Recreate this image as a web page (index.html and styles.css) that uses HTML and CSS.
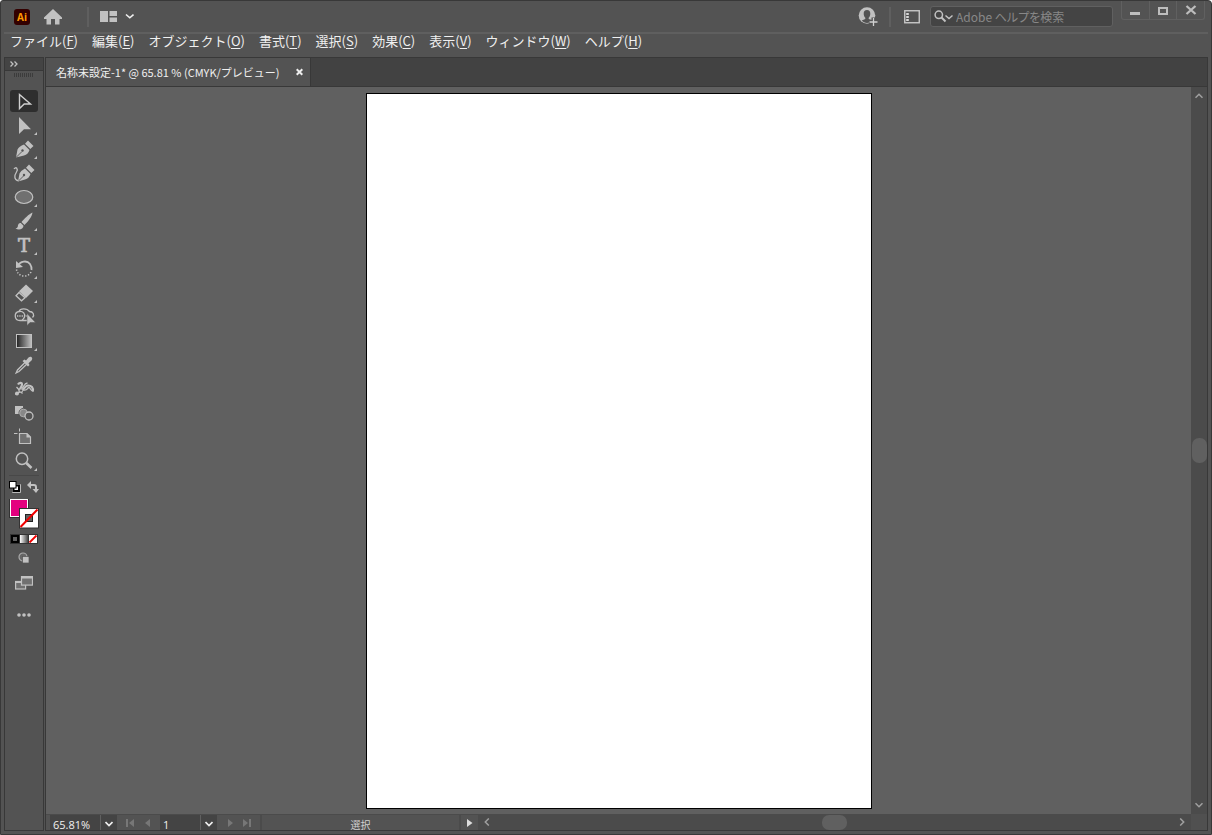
FILE: index.html
```html
<!DOCTYPE html>
<html lang="ja">
<head>
<meta charset="utf-8">
<meta name="viewport" content="width=device-width, initial-scale=1">
<title>名称未設定-1</title>
<link rel="stylesheet" href="styles.css">
</head>
<body>
<div class="app">
  <header class="titlebar">
    <svg class="logo" width="16" height="16" viewBox="0 0 16 16" role="img" aria-label="Ai"><rect width="16" height="16" rx="3" fill="#330000"/><text x="8" y="12" text-anchor="middle" class="logo-text">Ai</text></svg>
    <button class="icon-btn home" aria-label="ホーム"><svg width="18" height="16" viewBox="0 0 18 16"><path d="M9 0L18 8.5V10H15.500V15.500H11V10H7V15.500H2.500V10H0V8.500Z" fill="#c1c1c1"/></svg></button>
    <span class="divider"></span>
    <button class="icon-btn layout" aria-label="ワークスペース"><svg width="34" height="12" viewBox="0 0 34 12"><path d="M0 0H8V11H0ZM9.500 0H17V5H9.500ZM9.500 6.500H17V11H9.500Z" fill="#c1c1c1"/><path d="M26 3.500L29.800 6.800L33.500 3.500" fill="none" stroke="#f0f0f0" stroke-width="1.600"/></svg></button>
    <span class="spacer"></span>
    <button class="icon-btn" aria-label="招待"><svg width="20" height="20" viewBox="0 0 20 20"><circle cx="9" cy="8.500" r="8.300" fill="#c1c1c1"/><path d="M9 3C6.700 3 5.600 4.600 5.700 6.900C5.800 8.900 6.700 10 7.300 10.700V12L3.800 13.600C5 15 7 16 9 16S13 15 14.200 13.600L10.700 12V10.700C11.300 10 12.200 8.900 12.300 6.900C12.400 4.600 11.300 3 9 3Z" fill="#535353"/><path d="M15.500 10.500V19M11 14.700H19.500" stroke="#535353" stroke-width="4"/><path d="M15.500 11V19M11.500 15H19.500" stroke="#d0d0d0" stroke-width="1.300"/></svg></button>
    <span class="divider right-divider"></span>
    <button class="icon-btn panel-btn" aria-label="パネル"><svg width="16" height="14" viewBox="0 0 16 14"><rect x="0.750" y="0.750" width="14.500" height="12" fill="none" stroke="#c8c8c8" stroke-width="1.400"/><path d="M3.500 3V11" stroke="#d8d8d8" stroke-width="2.600" stroke-dasharray="2 1"/></svg></button>
    <label class="search">
      <svg width="20" height="14" viewBox="0 0 20 14"><circle cx="4.800" cy="4.800" r="3.700" fill="none" stroke="#c1c1c1" stroke-width="1.500"/><path d="M7.500 7.500L11.500 11.500" stroke="#c1c1c1" stroke-width="2"/><path d="M11.500 5.500L15 8.500L18.500 5.500" fill="none" stroke="#c1c1c1" stroke-width="1.500"/></svg>
      <input type="text" placeholder="Adobe ヘルプを検索" aria-label="Adobe ヘルプを検索">
    </label>
    <div class="window-buttons">
      <button aria-label="最小化"><svg width="12" height="12" viewBox="0 0 12 12"><rect x="1" y="8" width="10" height="3" fill="#bdbdbd"/></svg></button>
      <button aria-label="最大化"><svg width="12" height="12" viewBox="0 0 12 12"><rect x="2" y="4" width="8" height="6" fill="none" stroke="#bdbdbd" stroke-width="2"/></svg></button>
      <button aria-label="閉じる"><svg width="12" height="12" viewBox="0 0 12 12"><path d="M1.500 2L10.500 10M10.500 2L1.500 10" stroke="#bdbdbd" stroke-width="2.300"/></svg></button>
    </div>
  </header>

  <nav class="menubar">
    <button>ファイル(<u>F</u>)</button>
    <button>編集(<u>E</u>)</button>
    <button>オブジェクト(<u>O</u>)</button>
    <button>書式(<u>T</u>)</button>
    <button>選択(<u>S</u>)</button>
    <button>効果(<u>C</u>)</button>
    <button>表示(<u>V</u>)</button>
    <button>ウィンドウ(<u>W</u>)</button>
    <button>ヘルプ(<u>H</u>)</button>
  </nav>

  <main class="workspace">
    <aside class="tools">
      <button class="tools-head" aria-label="展開"><svg width="8" height="6" viewBox="0 0 8 6"><path d="M0.500 0.500L3 3L0.500 5.500M4.500 0.500L7 3L4.500 5.500" fill="none" stroke="#c1c1c1" stroke-width="1.300"/></svg></button>
      <div class="grip"></div>
      <div class="tool-list">
        <button class="tool selected" aria-label="選択"><svg viewBox="0 0 28 22"><path d="M9.500 4.500V18.500L14.200 14H20.500Z" fill="none" stroke="#d0d0d0" stroke-width="1.400"/></svg></button>
        <button class="tool more" aria-label="ダイレクト選択"><svg viewBox="0 0 28 22"><path class="fill" d="M9 3V20L14 15.200H21Z"/></svg></button>
        <button class="tool more" aria-label="ペン"><svg viewBox="0 0 28 22"><path class="fill" d="M6 19.500L7.500 11.500Q9 8.500 14 6.500L19.500 12Q18 16.500 14 17.500ZM15 5.700L18 2.500L23.500 8L20.300 11Z"/><path d="M6 19.500L12 13.500" stroke="#535353" stroke-width=".9"/><circle cx="12.500" cy="12.500" r="1.200" fill="#535353"/></svg></button>
        <button class="tool" aria-label="曲線"><svg viewBox="0 0 28 22"><path class="fill" d="M8 19.500L9.500 11.500Q11 8.500 15 6.500L20.500 12Q19 16.500 15 17.500ZM16 5.700L19 2.500L24.500 8L21.300 11Z"/><path d="M8 19.500L13.500 14" stroke="#535353" stroke-width=".9"/><circle cx="14" cy="13" r="1.200" fill="#535353"/><path class="line" d="M4 7C6 4 8.500 7 6.500 10C4.500 13 3.500 18 8.500 18.800"/></svg></button>
        <button class="tool more" aria-label="楕円形"><svg viewBox="0 0 28 22"><ellipse cx="14" cy="11" rx="8.800" ry="6.500" fill="#707070" stroke="#c1c1c1" stroke-width="1.200"/></svg></button>
        <button class="tool more" aria-label="ブラシ"><svg viewBox="0 0 28 22"><path class="fill" d="M22.500 2.500C19 4 14 9 11.500 12L14.500 15C17.500 12 22 7 22.500 2.500ZM10.800 13C8 13 8 15.500 7.700 17Q7 18.300 5.500 18.500C8.500 20.500 13.500 19.500 13.500 15.800Z"/></svg></button>
        <button class="tool more" aria-label="文字"><svg viewBox="0 0 28 22"><text class="type-icon" x="14" y="18" text-anchor="middle">T</text></svg></button>
        <button class="tool more" aria-label="回転"><svg viewBox="0 0 28 22"><path d="M8 8C10 3 17 2 20 6Q22 9 21.500 12" fill="none" stroke="#c1c1c1" stroke-width="1.800"/><path d="M21 14C18 20 8 19.500 6.500 11.500" fill="none" stroke="#c1c1c1" stroke-width="1.500" stroke-dasharray="1.300 1.700"/><path class="fill" d="M6 3V10L13 9Z"/></svg></button>
        <button class="tool more" aria-label="消しゴム"><svg viewBox="0 0 28 22"><path class="fill" d="M16 2.500L23 9L16 16L9 9.300Z"/><path class="line" d="M9 10.500L6 13.700L11.500 18.800L15 15.700Z"/></svg></button>
        <button class="tool" aria-label="シェイプ形成"><svg viewBox="0 0 28 22"><path class="line" d="M9 5.500C10 2 17 2 19.500 5.500C23 5.500 25 9 22.500 11.500M17 14.500H10C4 14.500 3.500 6 9.500 5.500C13 5 15.500 8 14.500 11Q13.500 13.500 12 14"/><path d="M7 10H18" stroke="#c1c1c1" stroke-width="1.300" stroke-dasharray="1.300 1"/><path d="M17 7.500V19.500L20 16.500H25.500Z" fill="#c1c1c1" stroke="#535353" stroke-width=".5"/></svg></button>
        <button class="tool more" aria-label="グラデーション"><svg viewBox="0 0 28 22"><defs><linearGradient id="tool-gradient"><stop stop-color="#222"/><stop offset="1" stop-color="#c1c1c1"/></linearGradient></defs><rect x="6.500" y="4.500" width="15" height="13" fill="url(#tool-gradient)" stroke="#c1c1c1"/></svg></button>
        <button class="tool" aria-label="スポイト"><svg viewBox="0 0 28 22"><path class="line" d="M15.500 8L7.500 16L6.200 18.800L9 17.500L17.500 9.500"/><path class="fill" d="M12.500 7L14.500 5.500L16 6.500L18.500 3.500C21 1.500 23.500 4 21.500 6.500L18.500 9.200L19.500 11L18 12.500Z"/></svg></button>
        <button class="tool" aria-label="パペットワープ"><svg viewBox="0 0 28 22"><path d="M8 6.500C9 4.500 12 4 12 6.500C12 9 8.500 12 9.500 13.500C12 15 14.500 7.500 18 7.500C21.500 7.500 23.500 9.500 22.800 13.500" fill="none" stroke="#c1c1c1" stroke-width="2.200"/><path class="line" d="M12 10.500C14 8.500 14 5.500 17.500 5M6.500 9L12.500 15.500M5 16C9 15.500 11 11.500 14 12C18 12.500 17 9.500 19 9.500C20.500 9.500 20 12.500 23 13"/><circle cx="11" cy="12.500" r="1.700" fill="#535353" stroke="#c1c1c1"/><circle class="fill" cx="7" cy="15.500" r="2"/></svg></button>
        <button class="tool" aria-label="ブレンド"><svg viewBox="0 0 28 22"><rect class="fill" x="5" y="4" width="8" height="8"/><circle cx="13.500" cy="11" r="4.500" fill="#888" stroke="#535353"/><circle cx="13.500" cy="11" r="3.800" fill="#888" stroke="#aaa"/><circle cx="19" cy="14" r="4" fill="#535353" stroke="#c1c1c1" stroke-width="1.300"/></svg></button>
        <button class="tool" aria-label="アートボード"><svg viewBox="0 0 28 22"><path d="M9.500 7.500H17L20.500 11V17.500H9.500Z" fill="#707070" stroke="#c1c1c1" stroke-width="1.200"/><path class="fill" d="M16.500 7L21 11.500H16.500Z"/><path d="M9.500 2.500V5.500M4 7.500H7.500" stroke="#c1c1c1"/></svg></button>
        <button class="tool more" aria-label="ズーム"><svg viewBox="0 0 28 22"><circle cx="12" cy="8.700" r="5.700" fill="none" stroke="#c1c1c1" stroke-width="1.500"/><path d="M16.300 13L21.500 18" stroke="#c1c1c1" stroke-width="2.600"/></svg></button>
      </div>
      <div class="colors">
        <div class="color-row">
          <button class="icon-btn" aria-label="初期設定の塗りと線"><svg width="12" height="12" viewBox="0 0 12 12"><path d="M4 4H11V11H4Z" fill="none" stroke="#ddd" stroke-width="1.500"/><rect x="4.500" y="4.500" width="5.500" height="5.500" fill="#fff" stroke="#000" stroke-width="2"/><rect x=".5" y=".5" width="6.500" height="6.500" fill="#fff" stroke="#000"/></svg></button>
          <button class="icon-btn" aria-label="塗りと線を入れ替え"><svg width="12" height="12" viewBox="0 0 12 12"><path d="M3 4H7Q9 4 9 6V9" fill="none" stroke="#c1c1c1" stroke-width="2"/><path d="M0 4L4 0V8ZM9 12L5.500 8H12Z" fill="#c1c1c1"/></svg></button>
        </div>
        <button class="icon-btn" aria-label="塗りと線"><svg width="30" height="30" viewBox="0 0 30 30"><rect width="20" height="19" fill="#333"/><rect x="1.500" y=".5" width="17" height="17" fill="#e4007f" stroke="#fff"/><rect x="10" y="9" width="20" height="20.500" fill="#333"/><rect x="11" y="10" width="18" height="18.500" fill="#fff"/><rect x="16.500" y="15.500" width="7" height="7" fill="#606060" stroke="#222"/><path d="M11.500 28L28.500 10.500" stroke="#f00000" stroke-width="2"/></svg></button>
        <button class="icon-btn modes" aria-label="カラーモード"><svg width="28" height="10" viewBox="0 0 28 10"><defs><linearGradient id="mode-gradient"><stop stop-color="#fff"/><stop offset="1" stop-color="#444"/></linearGradient></defs><rect width="28" height="10" fill="#333"/><rect x="1" y="1" width="8" height="8" fill="#000"/><rect x="3" y="3" width="4" height="4" fill="#606060"/><rect x="10" y="1" width="8" height="8" fill="url(#mode-gradient)"/><rect x="19" y="1" width="8" height="8" fill="#fff"/><path d="M19.500 8.500L26.500 1.500" stroke="#f00000" stroke-width="1.800"/></svg></button>
        <button class="icon-btn draw-mode" aria-label="描画モード"><svg width="12" height="12" viewBox="0 0 12 12"><circle cx="5" cy="5" r="4" fill="#666" stroke="#aaa" stroke-width="1.200"/><rect x="4.500" y="4.500" width="6.500" height="6.500" fill="#c1c1c1" stroke="#535353" stroke-width=".7"/></svg></button>
        <button class="icon-btn screen-mode" aria-label="スクリーンモード"><svg width="18" height="14" viewBox="0 0 18 14"><rect x=".6" y="5.500" width="10" height="7.500" fill="#707070" stroke="#c1c1c1" stroke-width="1.200"/><rect x="6.500" y=".6" width="11" height="8.500" fill="#707070" stroke="#c1c1c1" stroke-width="1.200"/><path d="M0 6H6M6 1.500H18" stroke="#c1c1c1" stroke-width="1.800"/></svg></button>
        <button class="icon-btn" aria-label="ツールバーを編集"><svg width="16" height="6" viewBox="0 0 16 6"><g class="fill"><circle cx="3" cy="3" r="1.800"/><circle cx="8" cy="3" r="1.800"/><circle cx="13" cy="3" r="1.800"/></g></svg></button>
      </div>
    </aside>

    <section class="document">
      <div class="tabs">
        <div class="tab"><span>名称未設定-1* @ 65.81 % (CMYK/プレビュー)</span><button class="icon-btn" aria-label="タブを閉じる"><svg width="7" height="8" viewBox="0 0 7 8"><path d="M.7 1.200L6.300 6.800M6.300 1.200L.7 6.800" stroke="#eee" stroke-width="2"/></svg></button></div>
      </div>
      <div class="view">
        <div class="canvas"><div class="artboard"></div></div>
        <div class="vscroll">
          <button class="icon-btn" aria-label="上へ"><svg width="8" height="6" viewBox="0 0 8 6"><path class="arrow" d="M.5 4.800L4 1.300L7.500 4.800"/></svg></button>
          <span class="vthumb"></span>
          <button class="icon-btn" aria-label="下へ"><svg width="8" height="6" viewBox="0 0 8 6"><path class="arrow" d="M.5 1.200L4 4.700L7.500 1.200"/></svg></button>
        </div>
      </div>
      <footer class="bottom">
        <div class="status">
          <input class="field zoom-field" type="text" value="65.81%" aria-label="ズーム">
          <button class="drop" aria-label="ズームを選択"><svg width="8" height="6" viewBox="0 0 8 6"><path d="M.5 1L4 4.500L7.500 1" fill="none" stroke="#eee" stroke-width="1.700"/></svg></button>
          <div class="nav-pair">
            <button class="icon-btn" aria-label="先頭"><svg width="8" height="8" viewBox="0 0 8 8"><path d="M0 0H2V8H0ZM8 0V8L3 4Z" fill="#777"/></svg></button>
            <button class="icon-btn" aria-label="前へ"><svg width="8" height="8" viewBox="0 0 8 8"><path d="M7 0V8L2 4Z" fill="#777"/></svg></button>
          </div>
          <input class="field page-field" type="text" value="1" aria-label="アートボード">
          <button class="drop" aria-label="アートボードを選択"><svg width="8" height="6" viewBox="0 0 8 6"><path d="M.5 1L4 4.500L7.500 1" fill="none" stroke="#eee" stroke-width="1.700"/></svg></button>
          <div class="nav-pair">
            <button class="icon-btn" aria-label="次へ"><svg width="8" height="8" viewBox="0 0 8 8"><path d="M2 0V8L7 4Z" fill="#777"/></svg></button>
            <button class="icon-btn" aria-label="最後"><svg width="8" height="8" viewBox="0 0 8 8"><path d="M0 0V8L5 4ZM6 0H8V8H6Z" fill="#777"/></svg></button>
          </div>
          <span class="current-tool">選択</span>
          <button class="icon-btn play" aria-label="表示項目"><svg width="6" height="8" viewBox="0 0 6 8"><path d="M0 0V8L5.500 4Z" fill="#ddd"/></svg></button>
        </div>
        <div class="hscroll">
          <button class="icon-btn" aria-label="左へ"><svg width="6" height="8" viewBox="0 0 6 8"><path class="arrow" d="M4.800 .5L1.300 4L4.800 7.500"/></svg></button>
          <span class="hthumb"></span>
          <button class="icon-btn" aria-label="右へ"><svg width="6" height="8" viewBox="0 0 6 8"><path class="arrow" d="M1.200 .5L4.700 4L1.200 7.500"/></svg></button>
        </div>
        <span class="corner"></span>
      </footer>
    </section>
  </main>
</div>
</body>
</html>
```
FILE: styles.css
```css
* { box-sizing: border-box; }

body {
  margin: 0;
  background: #fff;
  color: #f0f0f0;
  font: 12px/16px "Noto Sans CJK JP", sans-serif;
}

button, input {
  margin: 0;
  padding: 0;
  border: 0;
  background: none;
  color: inherit;
  font: inherit;
}

svg { display: block; }
.fill { fill: #c1c1c1; }
.line { fill: none; stroke: #c1c1c1; stroke-width: 1.3; }
.arrow { fill: none; stroke: #a0a0a0; stroke-width: 1.5; }

.app {
  display: flex;
  flex-direction: column;
  height: 100vh;
  padding: 0 3px 3px;
  border: 1px solid #383838;
  border-radius: 3px 4px 0 0;
  background: #535353;
}

.icon-btn {
  display: flex;
  align-items: center;
  justify-content: center;
}

/* Title bar */
.titlebar {
  display: flex;
  align-items: center;
  height: 33px;
  padding-left: 10px;
  border-bottom: 2px solid #5f5f5f;
}

.logo-text {
  fill: #ff9a00;
  font: bold 10px "Open Sans", sans-serif;
}

.home { margin-left: 14px; }
.divider { width: 2px; height: 20px; margin-left: 25px; background: #5f5f5f; }
.layout { margin-left: 11px; }
.spacer { flex: 1; }
.right-divider { margin-left: 11px; }
.panel-btn { margin-left: 13px; }

.search {
  display: flex;
  align-items: center;
  gap: 2px;
  width: 183px;
  height: 21px;
  margin-left: 10px;
  padding-left: 3px;
  border: 1px solid #606060;
  border-radius: 3px;
  background: #444;
}

.search input {
  flex: 1;
  min-width: 0;
  height: 18px;
  font-size: 12px;
  font-feature-settings: "palt";
}

.search input::placeholder { color: #888; opacity: 1; }

.window-buttons {
  display: flex;
  align-self: flex-start;
  width: 84px;
  margin: 0 3px 0 8px;
  border: solid #606060;
  border-width: 0 1px 1px;
  border-radius: 0 0 3px 3px;
}

.window-buttons button {
  display: flex;
  flex: 1;
  align-items: center;
  justify-content: center;
  height: 18px;
}

.window-buttons button + button { border-left: 1px solid #606060; }

/* Menu bar */
.menubar {
  display: flex;
  gap: 14px;
  height: 23px;
  padding-left: 6px;
}

.menubar button {
  height: 14px;
  font-size: 13px;
  line-height: 14px;
  white-space: nowrap;
}

.menubar u { text-underline-offset: 2px; }

/* Tools */
.workspace {
  display: flex;
  flex: 1;
  gap: 1px;
  min-height: 0;
}

.tools {
  display: flex;
  flex-direction: column;
  align-items: center;
  width: 40px;
  border: 1px solid #383838;
}

.tools-head {
  width: 100%;
  height: 13px;
  padding-left: 5px;
  border-bottom: 1px solid #383838;
  background: #444;
}

.grip {
  width: 20px;
  height: 4px;
  margin: 2px 0 13px;
  background: repeating-linear-gradient(90deg, #3c3c3c 0 1px, #535353 1px 2px);
}

.tool-list { display: grid; gap: 2px; }

.tool {
  position: relative;
  width: 28px;
  height: 22px;
  border-radius: 3px;
}

.tool svg { width: 28px; height: 22px; }
.selected { background: #2e2e2e; }

.more::after {
  content: "";
  position: absolute;
  right: 1px;
  bottom: 1px;
  border-bottom: 3px solid #c1c1c1;
  border-left: 3px solid transparent;
}

.type-icon {
  fill: #c1c1c1;
  stroke: #c1c1c1;
  stroke-width: 0.7;
  font: 18px "DejaVu Serif", serif;
}

.colors {
  display: flex;
  flex-direction: column;
  align-items: center;
  width: 30px;
  margin-top: 3px;
  padding-top: 5px;
  border-top: 1px solid #484848;
}

.color-row {
  display: flex;
  justify-content: space-between;
  width: 100%;
  height: 12px;
  margin-bottom: 6px;
}

.modes { margin-top: 5px; }
.draw-mode { margin-top: 8px; }
.screen-mode { margin: 12px 0 22px; }

/* Document */
.document {
  display: flex;
  flex: 1;
  flex-direction: column;
  min-width: 0;
  border: 1px solid #383838;
}

.tabs {
  display: flex;
  height: 29px;
  border-bottom: 1px solid #383838;
  background: #424242;
}

.tab {
  display: flex;
  align-items: center;
  gap: 16px;
  padding: 0 7px 0 10px;
  border-right: 1px solid #383838;
  background: #535353;
  font-size: 11px;
  white-space: nowrap;
}

.view { display: flex; flex: 1; min-height: 0; }

.canvas {
  display: flex;
  flex: 1;
  justify-content: center;
  min-width: 0;
  padding: 6px 0 5px;
  background: #606060;
}

.artboard {
  height: 100%;
  aspect-ratio: 506 / 716;
  border: 1px solid #000;
  background: #fff;
}

.vscroll {
  display: flex;
  flex-direction: column;
  align-items: center;
  justify-content: space-between;
  width: 16px;
  padding: 6px 0;
  background: #4b4b4b;
}

.vthumb, .hthumb { border-radius: 7px; background: #606060; }
.vthumb { width: 15px; height: 25px; }
.hthumb { width: 25px; height: 15px; }

.bottom { display: flex; height: 16px; }

.status {
  display: flex;
  width: 432px;
  padding-left: 4px;
  border-top: 1px solid #4b4b4b;
}

.field {
  height: 15px;
  background: #444;
  font: 11px/15px "Open Sans", sans-serif;
}

.zoom-field { width: 50px; padding: 4px 0 0 3px; }
.page-field { width: 40px; padding: 4px 0 0 3px; }

.drop {
  display: flex;
  align-items: center;
  justify-content: center;
  width: 17px;
  padding-top: 3px;
  border-left: 1px solid #606060;
  background: #444;
}

.nav-pair {
  display: flex;
  justify-content: center;
  gap: 9px;
  width: 43px;
}

.current-tool {
  flex: 1;
  padding-top: 2px;
  border: solid #4b4b4b;
  border-width: 0 2px;
  color: #d0d0d0;
  font-size: 10px;
  line-height: 15px;
  text-align: center;
}

.play { width: 17px; }

.hscroll {
  display: flex;
  flex: 1;
  align-items: center;
  justify-content: space-between;
  padding: 0 6px;
  background: #4b4b4b;
}

.corner { width: 16px; background: #505050; }
```
